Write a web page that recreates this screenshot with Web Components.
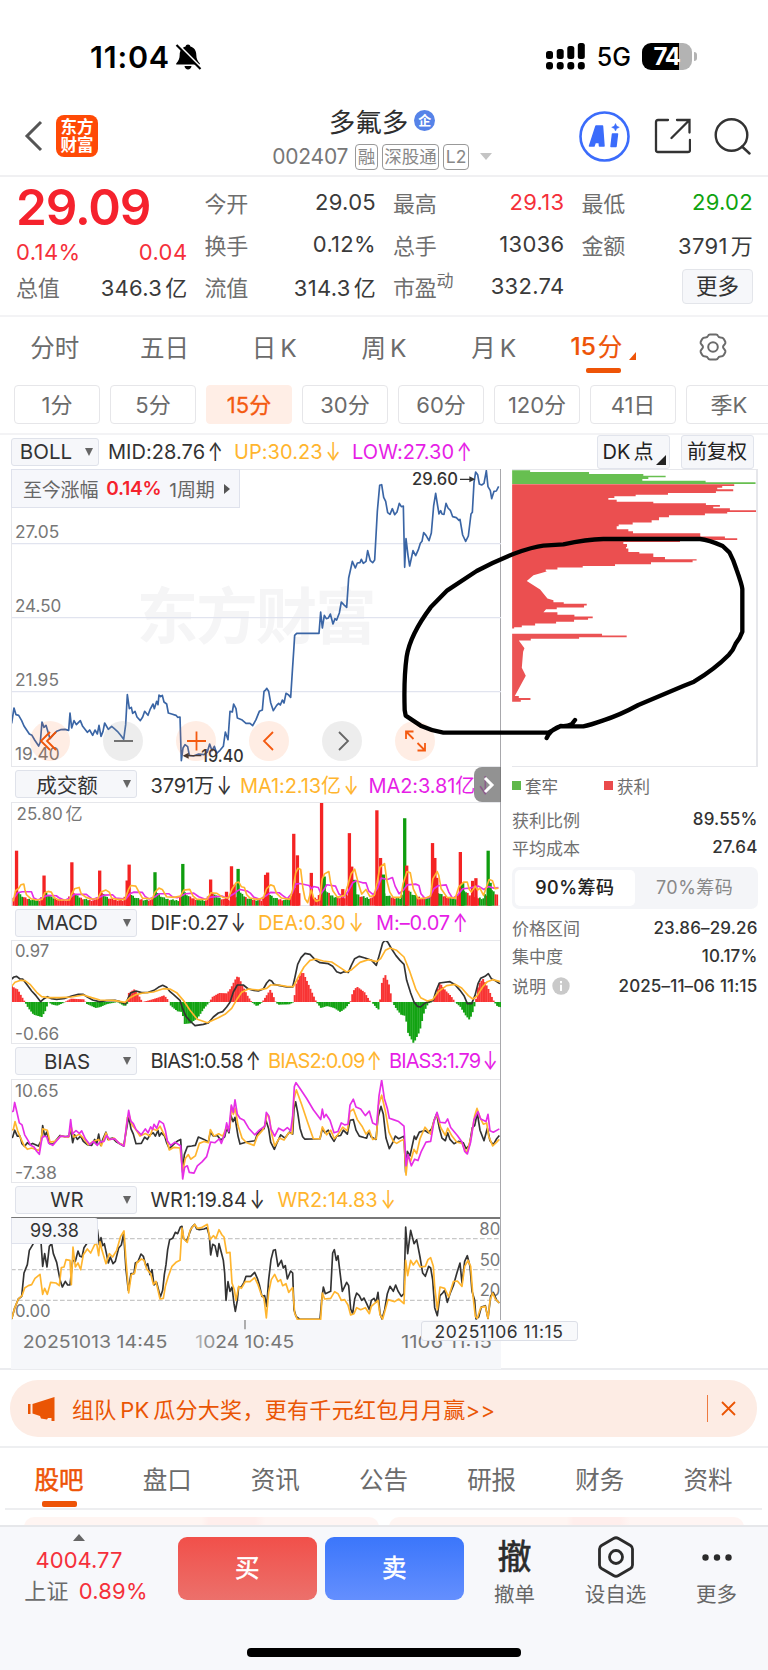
<!DOCTYPE html>
<html lang="zh-CN">
<head>
<meta charset="utf-8">
<meta name="viewport" content="width=device-width, initial-scale=1">
<title>多氟多 002407</title>
<style>
  body {
    margin: 0;
    background: #fff;
    color: #333;
    font-family: Inter, "Noto Sans CJK SC", sans-serif;
    overflow: hidden;
  }
</style>
</head>
<body>
<stock-app></stock-app>

<script>
// Base class: every element renders its markup once into an open shadow root
class BaseElement extends HTMLElement {
  constructor() {
    super();
    this.attachShadow({ mode: 'open' });
  }
  connectedCallback() {
    this.shadowRoot.innerHTML = `
      <style>
        :host { display: block; box-sizing: border-box; }
        * { box-sizing: border-box; }
        svg { display: block; flex: none; }
      </style>` + this.render();
  }
}

class StatusBar extends BaseElement {
  render() {
    return `
      <style>
        :host { height: 96px; padding: 41px 71px 0 90px; color: #000; }
        .row { display: flex; align-items: center; height: 31px; }
        .time { font-size: 30.500px; font-weight: 600; letter-spacing: 0.8px; width: 84px; white-space: nowrap; }
        .net { font-size: 25px; font-weight: 500; margin: 0 11px 0 12px; letter-spacing: 0.1px; }
        .signal { margin-left: auto; }
        .battery { display: flex; align-items: center; }
        .level {
          width: 50px; height: 27px; border-radius: 9px; text-align: center;
          background: linear-gradient(90deg, #000 74%, #b3b3b3 74%);
          color: #fff; font-size: 24px; font-weight: 700; line-height: 27px; letter-spacing: -1.3px;
          padding-right: 1px;
        }
        .cap { width: 3px; height: 9px; margin-left: 2px; border-radius: 0 4px 4px 0; background: #b3b3b3; }
      </style>
      <div class="row">
        <span class="time">11:04</span>
        <svg width="28" height="28" viewBox="0 0 28 28">
          <path d="M14 1.500c1.400 0 2.200.8 2.400 2 4 1.200 5.800 4.200 5.900 8.200.1 4 1 5.800 3.500 8.700v1.100H2.200v-1.100c2.500-2.900 3.400-4.700 3.500-8.700.1-4 1.900-7 5.900-8.200.2-1.200 1-2 2.400-2z"/>
          <path d="M10.500 23h7c-.3 2.200-1.700 3.400-3.500 3.400s-3.200-1.200-3.500-3.400z"/>
          <path d="M4 2 27.500 25.500" stroke="#fff" stroke-width="3"/>
          <path d="M2.500 2 26.500 26" stroke="#000" stroke-width="2.200"/>
        </svg>
        <svg class="signal" width="39" height="27" viewBox="0 0 39 27">
          <g>
            <rect x="0" y="8" width="7" height="8" rx="2.500"/><rect x="10.700" y="6" width="7" height="10" rx="2.500"/>
            <rect x="21.300" y="3" width="7" height="13" rx="2.500"/><rect x="31.800" y="0" width="7" height="16" rx="2.500"/>
            <rect x="0" y="19" width="7" height="7.500" rx="3"/><rect x="10.700" y="19" width="7" height="7.500" rx="3"/>
            <rect x="21.300" y="19" width="7" height="7.500" rx="3"/><rect x="31.800" y="19" width="7" height="7.500" rx="3"/>
          </g>
        </svg>
        <span class="net">5G</span>
        <div class="battery"><div class="level">74</div><div class="cap"></div></div>
      </div>`;
  }
}
customElements.define('status-bar', StatusBar);

class StockHeader extends BaseElement {
  render() {
    return `
      <style>
        :host {
          display: flex; align-items: center; height: 81px; padding: 0 17px 0 24px;
          border-bottom: 2px solid #f0f0f2;
        }
        .side { display: flex; align-items: center; width: 199px; padding-top: 1px; }
        .left { width: 188px; }
        .logo {
          display: grid; place-content: center; width: 42px; height: 42px; margin-left: 13px;
          border-radius: 8px; background: #ff4a06; color: #fff; text-align: center;
          font-size: 16.500px; line-height: 18px; font-weight: 700;
        }
        .center { flex: 1; display: flex; flex-direction: column; align-items: center; padding-top: 7px; }
        .name { display: flex; align-items: center; height: 35px; font-size: 26.500px; color: #2e2e2e; }
        .badge {
          width: 21px; height: 21px; margin-left: 6px; border-radius: 50%; background: #5683e8;
          color: #fff; font-size: 13px; font-weight: 700; line-height: 20px; text-align: center;
        }
        .code { display: flex; align-items: center; gap: 4px; height: 38px; font-size: 21px; color: #777; white-space: nowrap; }
        .num { margin-right: 3px; letter-spacing: -0.2px; }
        .tag {
          height: 26px; padding: 0 1.500px; border: 1.500px solid #999; border-radius: 4px;
          font-size: 17.500px; line-height: 23px; color: #888;
        }
        .code svg { margin-left: 7px; }
        .right { justify-content: flex-end; gap: 23.500px; }
      </style>
      <div class="side left">
        <svg width="19" height="32" viewBox="0 0 19 32"><path d="M17 2 3 16l14 14" fill="none" stroke="#555" stroke-width="3"/></svg>
        <div class="logo"><span>东方</span><span>财富</span></div>
      </div>
      <div class="center">
        <div class="name">多氟多<span class="badge">企</span></div>
        <div class="code">
          <span class="num">002407</span>
          <span class="tag">融</span><span class="tag">深股通</span><span class="tag">L2</span>
          <svg width="12" height="7" viewBox="0 0 12 7"><path d="M0 0h12L6 7z" fill="#c4c4c4"/></svg>
        </div>
      </div>
      <div class="side right">
        <svg width="51" height="51" viewBox="0 0 51 51">
          <circle cx="25.500" cy="25.500" r="24" fill="none" stroke="#3b6cfb" stroke-width="2.600"/>
          <g fill="#3b6cfb" stroke="#3b6cfb" stroke-width="1.500" stroke-linejoin="round">
            <path fill-rule="evenodd" d="M10.500 35 17 15h6.500L25 35h-4.500l-.3-3.500h-4l-1.200 3.500zM17.800 27.500h2l-.2-5z"/>
            <path d="M33.500 23h5l-1.500 12.500h-5z"/>
            <path d="M36.500 12.500l1.200 2.600 2.600 1.200-2.600 1.200-1.200 2.500-1.200-2.500-2.600-1.200 2.600-1.200z" stroke-width="0.500"/>
          </g>
        </svg>
        <svg width="37" height="36" viewBox="0 0 37 36" fill="none" stroke="#333" stroke-width="2.300" stroke-linecap="round">
          <path d="M14 2H4Q2 2 2 4v28q0 2 2 2h30q2 0 2-2V22M23 2h12.500v12.500M35 2.500 17.500 20"/>
        </svg>
        <svg width="37" height="38" viewBox="0 0 37 38" fill="none" stroke="#333" stroke-width="2.400" stroke-linecap="round">
          <circle cx="17.500" cy="18" r="15.800"/><path d="m28 29.500 7.500 7"/>
        </svg>
      </div>`;
  }
}
customElements.define('stock-header', StockHeader);

class QuotePair extends BaseElement {
  render() {
    // Chinese units stand a little apart from the digits
    const value = this.getAttribute('value').replace(/[亿万]/, '<i>$&</i>');
    return `
      <style>
        :host { display: flex; justify-content: space-between; align-items: center; height: 42px; font-size: 22px; white-space: nowrap; }
        .label { color: #6e6e6e; letter-spacing: -0.2px; }
        .value { color: var(--tone, #3a3a3a); letter-spacing: 0.3px; }
        i { margin-left: 3px; font-style: normal; }
        sup { font-size: 17px; line-height: 0; vertical-align: 9px; }
      </style>
      <span class="label"><slot></slot>${this.hasAttribute('sup') ? `<sup>${this.getAttribute('sup')}</sup>` : ''}</span>
      <span class="value">${value}</span>`;
  }
}
customElements.define('quote-pair', QuotePair);

class QuoteGrid extends BaseElement {
  render() {
    return `
      <style>
        :host {
          display: grid; grid-template-columns: repeat(4, 171.500px); column-gap: 17px;
          height: 140px; padding: 4px 15px 0 16px; border-bottom: 2px solid #f3f3f5;
        }
        .price { height: 52px; color: #f5222d; font-size: 49.500px; line-height: 52px; font-weight: 600; letter-spacing: -1.1px; }
        .change { display: flex; justify-content: space-between; height: 32px; line-height: 38px; color: #f5303a; font-size: 22px; letter-spacing: 0.4px; }
        .up { --tone: #f5303a; }
        .down { --tone: #0fa30f; }
        .more {
          width: 71px; height: 35px; margin: 4px 0 0 auto; border: 1px solid #e3e5ea; border-radius: 4px;
          background: #f6f7fa; text-align: center; font-size: 21.500px; line-height: 32px;
        }
      </style>
      <div>
        <div class="price">29.09</div>
        <div class="change"><span>0.14%</span><span>0.04</span></div>
        <quote-pair value="346.3亿">总值</quote-pair>
      </div>
      <div>
        <quote-pair value="29.05">今开</quote-pair>
        <quote-pair value="0.12%">换手</quote-pair>
        <quote-pair value="314.3亿">流值</quote-pair>
      </div>
      <div>
        <quote-pair class="up" value="29.13">最高</quote-pair>
        <quote-pair value="13036">总手</quote-pair>
        <quote-pair value="332.74" sup="动">市盈</quote-pair>
      </div>
      <div>
        <quote-pair class="down" value="29.02">最低</quote-pair>
        <quote-pair value="3791万">金额</quote-pair>
        <div class="more">更多</div>
      </div>`;
  }
}
customElements.define('quote-grid', QuoteGrid);

class PeriodTabs extends BaseElement {
  render() {
    const tabs = ['分时', '五日', '日 K', '周 K', '月 K'];
    return `
      <style>
        :host { display: grid; grid-template-columns: repeat(7, 1fr); height: 62px; font-size: 24.500px; color: #6b6b6b; }
        div { display: flex; justify-content: center; align-items: center; height: 58px; word-spacing: -3px; }
        .on { display: grid; grid-template-rows: 51px 5px; height: 56px; justify-items: center; align-content: start; color: #ee5407; }
        .on span { display: flex; align-items: center; padding-top: 6px; gap: 2px; height: 51px; white-space: nowrap; -webkit-text-stroke: 0.2px #ee5407; }
        .on svg { margin: 20px 0 0 5px; }
        .on i { width: 35px; height: 5px; border-radius: 2px; background: #ee5407; }
        .gear svg { margin-top: 1px; }
      </style>
      ${tabs.map(t => `<div>${t}</div>`).join('')}
      <div class="on">
        <span><b style="font-weight:500">15</b>分<svg width="7" height="8" viewBox="0 0 7 8"><path d="M7 0v8H0z" fill="#ee5407"/></svg></span>
        <i></i>
      </div>
      <div class="gear">
        <svg width="30" height="28" viewBox="0 0 30 28" fill="none" stroke="#6b6b6b" stroke-width="2" stroke-linejoin="round">
          <path d="M12 1.500h6q1.500 0 2 1.300.7 1.700 2.500 1.700 2.500 0 3.300 1.500l1.500 2.800q.5 1.300-.6 2.500-1.700 1.700-1.700 2.700t1.700 2.700q1.100 1.200.6 2.500L25.800 22q-.8 1.500-3.300 1.500-1.800 0-2.500 1.700-.5 1.300-2 1.300h-6q-1.500 0-2-1.300-.7-1.700-2.500-1.700-2.500 0-3.300-1.500l-1.500-2.800q-.5-1.300.6-2.500Q5 15 5 14t-1.700-2.700q-1.100-1.200-.6-2.500L4.200 6Q5 4.500 7.500 4.500 9.300 4.500 10 2.800q.5-1.300 2-1.300z"/>
          <circle cx="15" cy="14" r="4.800"/>
        </svg>
      </div>`;
  }
}
customElements.define('period-tabs', PeriodTabs);

class PeriodChips extends BaseElement {
  render() {
    const chips = ['1分', '5分', '15分', '30分', '60分', '120分', '41日', '季K'];
    return `
      <style>
        :host { height: 55.500px; padding: 6px 0 0 14px; border-bottom: 2px solid #f3f3f5; overflow: hidden; }
        .row { display: flex; gap: 10px; width: 800px; }
        .chip {
          flex: none; width: 86px; height: 39px; border: 1.500px solid #e6e6e9; border-radius: 4px;
          text-align: center; font-size: 22px; line-height: 38px; color: #6b6b6b;
        }
        .on { border-color: #ffeee6; background: #ffeee6; color: #f45a10; -webkit-text-stroke: 0.3px #f45a10; }
      </style>
      <div class="row">
        ${chips.map(c => `<div class="chip ${c === '15分' ? 'on' : ''}">${c}</div>`).join('')}
      </div>`;
  }
}
customElements.define('period-chips', PeriodChips);

// Select box with the indicator name, followed by its current readings
class IndicatorBar extends BaseElement {
  render() {
    const colors = ['#333', '#ffb52e', '#e61ee6'];
    const values = this.getAttribute('values').split('|');
    return `
      <style>
        :host { display: flex; align-items: center; height: 34.500px; padding-left: 4px; white-space: nowrap; }
        .select {
          display: flex; flex: none; align-items: center; width: 122px; height: 28px; padding-right: 5px;
          border: 1px solid #dfe2ea; border-radius: 3px; background: #f6f7fa; font-size: 20.500px; color: #333;
        }
        .select span { flex: 1; text-align: center; padding-right: 5px; }
        .values {
          display: grid; grid-template-columns: ${this.getAttribute('cols')}; margin-left: 13.500px;
          font-size: 20px; letter-spacing: var(--track, -0.1px);
        }
        .values i {
          display: inline-block; width: 10px; margin-left: 5px; font-style: normal; text-indent: -3px;
          letter-spacing: 0; transform: scale(0.9, 1.3);
        }
        :host([compact]) { padding-left: 0; }
        :host([compact]) .select { width: 88px; }
        :host([compact]) .select span { padding-right: 4px; }
        :host([compact]) .values { margin-left: 9.500px; }
      </style>
      <div class="select"><span><slot></slot></span>
        <svg width="8" height="8" viewBox="0 0 8 8"><path d="M0 0h8L4 8z" fill="#666"/></svg>
      </div>
      <div class="values">
        ${values.map((v, i) => `<span style="color:${colors[i]}">${v.slice(0, -1)}<i>${v.slice(-1)}</i></span>`).join('')}
      </div>`;
  }
}
customElements.define('indicator-bar', IndicatorBar);

class OverlayBar extends BaseElement {
  render() {
    return `
      <style>
        :host { display: flex; align-items: center; height: 34.500px; padding: 0 14.500px 0 10.500px; }
        indicator-bar { flex: 1; --track: 0.05px; }
        .btn {
          position: relative; width: 73px; height: 34px; margin-left: 11px; border: 1px solid #e1e4ec; border-radius: 3px;
          background: #f6f7fa; text-align: center; font-size: 20px; line-height: 32px; color: #222; white-space: nowrap;
        }
        .dk { padding-right: 10px; }
        .dk span { margin-left: 3px; }
        .dk svg { position: absolute; right: 3px; bottom: 3px; }
      </style>
      <indicator-bar compact cols="126px 118px auto" values="MID:28.76↑|UP:30.23↓|LOW:27.30↑">BOLL</indicator-bar>
      <div class="btn dk">DK<span>点</span><svg width="10" height="10" viewBox="0 0 10 10"><path d="M10 0v10H0z" fill="#222"/></svg></div>
      <div class="btn">前复权</div>`;
  }
}
customElements.define('overlay-bar', OverlayBar);

// Shared helpers for the charts; all plots use three units per CSS pixel
const line = (points, color, width = 4) =>
  `<polyline points="${points}" fill="none" stroke="${color}" stroke-width="${width}" stroke-linejoin="round"/>`;
const label = (x, y, text, width, color = '#777', weight = 400) =>
  `<text x="${x}" y="${y}" textLength="${width}" lengthAdjust="spacingAndGlyphs" font-size="51" font-weight="${weight}" fill="${color}">${text}</text>`;

class PriceChart extends BaseElement {
  render() {
    const price = `35,776 42,730 48,750 56,752 65,768 72,784 80,796 88,808 96,812 104,826 116,844 121,832 126,772 132,788
      138,782 145,805 150,822 160,810 170,800 182,795 195,794 206,797 210,745 215,790 222,768 229,780 241,768 248,785 262,803
      269,796 278,812 285,796 292,808 297,782 303,815 309,800 314,775 325,794 335,785 343,792 352,800 362,812 371,824 377,780
      382,690 388,732 394,728 398,746 405,740 411,757 421,768 428,757 434,740 444,752 450,735 459,718 463,732 470,710 474,720
      477,691 482,696 487,692 492,712 500,718 505,745 515,748 528,752 533,758 540,757 544,888 549,850 555,840 563,846 568,872
      580,874 596,868 612,870 622,862 629,838 636,858 643,845 650,866 660,857 670,845 676,802 684,825 690,740 697,742 701,718
      708,732 712,760 725,765 738,776 750,776 758,783 768,765 778,740 787,736 792,680 797,676 800,671 806,680 812,714 820,738
      830,722 836,716 841,721 847,706 852,715 858,686 865,690 872,698 878,605 881,560 884,512 890,506 957,506 962,442 967,490
      973,452 979,462 985,460 991,448 999,478 1005,462 1010,466 1018,445 1024,412 1031,420 1040,428 1046,340 1054,304
      1057,290 1066,310 1072,295 1080,294 1084,284 1090,296 1098,290 1103,258 1111,288 1118,294 1124,286 1132,140 1139,62
      1145,60 1151,98 1157,110 1163,144 1170,149 1177,132 1184,150 1191,142 1198,116 1204,126 1210,124 1214,308 1218,222
      1224,272 1229,304 1239,258 1247,273 1255,255 1261,236 1266,230 1271,204 1278,212 1287,228 1294,205 1301,123 1307,86
      1313,124 1317,148 1322,138 1326,148 1332,149 1338,116 1344,130 1351,137 1358,156 1369,159 1377,167 1380,164 1388,211
      1397,230 1405,214 1413,148 1417,143 1422,54 1427,22 1433,30 1438,58 1445,61 1452,56 1459,18 1464,66 1471,78 1475,102
      1482,80 1489,79 1496,65`;
    return `
      <style>
        :host { position: relative; height: 298px; border: 1px solid #e6e7eb; border-right: 0; }
        .since {
          position: absolute; left: -1px; top: -1px; display: flex; align-items: center; gap: 8px; width: 229px; height: 39px; padding-left: 11px;
          border: 1px solid #dfe2ec; background: #f6f7fb; font-size: 19px; color: #666; white-space: nowrap; letter-spacing: -0.2px;
        }
        .since b { color: #f5222d; font-weight: 600; }
        .since svg { margin-left: 1px; }
        .tools { position: absolute; left: 18px; top: 251px; display: flex; gap: 33px; }
      </style>
      <svg width="489" height="296" viewBox="36 16 1467 888" font-family="Inter, 'Noto Sans CJK SC', sans-serif">
        <text x="410" y="523" textLength="720" font-size="184" font-weight="700" fill="#f5f5f6" font-family="Noto Sans CJK SC">东方财富</text>
        <path d="M33 237H1503M33 459H1503M33 681H1503" stroke="#e1e4ef" stroke-width="4"/>
        ${label(45, 219, '27.05', 133)}${label(45, 442, '24.50', 139)}${label(45, 664, '21.95', 132)}${label(45, 887, '19.40', 134)}
        ${line(price, '#3a65a5', 5)}
        ${label(1236, 62, '29.60', 138, '#333', 500)}${label(604, 892, '19.40', 127, '#333', 500)}
        <path d="M1380 44h36M552 873h52" stroke="#333" stroke-width="4"/>
        <path d="M1426 44l-18-9v18zM548 873l18-9v18z" fill="#333"/>
      </svg>
      <div class="since"><span>至今涨幅</span><b>0.14%</b><span>1周期</span>
        <svg width="6" height="10" viewBox="0 0 6 10"><path d="M0 0v10l6-5z" fill="#555"/></svg>
      </div>
      <div class="tools">${this.tools()}</div>`;
  }
  tools() {
    const icons = [
      ['#ee5407', 'M20 11 11 20l9 9M26 11l-9 9 9 9'],
      ['#666', 'M11 20h19'],
      ['#f45a10', 'M11 20h19M20.500 10.500v19'],
      ['#f45a10', 'M24 11l-9 9 9 9'],
      ['#666', 'M17 11l9 9-9 9'],
      ['#f45a10', 'M11 18v-7.500h7.500M11.500 11l7 7M30 22v7.500h-7.500M29.500 29l-7-7']
    ];
    return icons.map(([c, d]) => `
      <svg width="40" height="40" viewBox="0 0 40 40">
        <circle cx="20" cy="20" r="20" fill="${c === '#666' ? '#999' : '#ff6a20'}" opacity="${c === '#666' ? 0.18 : 0.12}"/>
        <path d="${d}" fill="none" stroke="${c}" stroke-width="1.800"/>
      </svg>`).join('');
  }
}
customElements.define('price-chart', PriceChart);

const BAR = 5.235;

class VolumeChart extends BaseElement {
  bars() {
    // Opening spikes: x, top, colour
    const spikes = [
      [45, 255, 1], [128, 330, 1], [212, 290, 1], [296, 315, 1], [379, 345, 1], [385, 297, 1], [463, 320, 0], [547, 295, 0],
      [631, 342, 1], [679, 379, 1], [694, 302, 1], [702, 358, 1], [714, 310, 0], [797, 328, 1], [803, 321, 1], [882, 204, 1],
      [893, 269, 1], [935, 322, 1], [966, 110, 1], [974, 333, 0], [1030, 371, 1], [1050, 202, 1], [1057, 303, 1], [1066, 343, 0],
      [1133, 133, 1], [1144, 277, 1], [1153, 327, 0], [1217, 157, 0], [1223, 300, 1], [1301, 232, 1], [1308, 277, 1],
      [1314, 337, 1], [1385, 259, 1], [1392, 353, 0], [1422, 346, 1], [1432, 338, 1], [1469, 255, 0], [1475, 352, 0]
    ];
    // Runs of falling bars
    const falls = [[47, 62], [80, 108], [130, 158], [217, 232], [245, 262], [300, 320], [387, 410], [424, 440], [462, 500],
      [508, 532], [545, 565], [585, 612], [640, 660], [712, 730], [738, 752], [762, 776], [805, 832], [845, 870], [970, 982],
      [990, 1010], [1060, 1080], [1086, 1110], [1150, 1172], [1186, 1206], [1228, 1252], [1275, 1292], [1312, 1330],
      [1348, 1372], [1384, 1400], [1440, 1458], [1466, 1484]];
    let out = '';
    for (let i = 0; i < 280; i++) {
      const x = 33 + i * BAR;
      if (x > 897 && x < 930) continue;
      const phase = (i + 14) % 16;
      const busy = x > 860 ? 1.4 : 1;
      const h = (13 + 32 * Math.exp(-phase / 3.6) + (i * 7 % 5)) * busy + (phase > 13 ? 10 : 0);
      const down = falls.some(([a, b]) => x >= a && x < b);
      out += `<rect x="${x.toFixed(1)}" y="${(421 - h).toFixed(1)}" width="5.400" height="${h.toFixed(1)}" fill="${down ? '#0f9d0f' : '#f42323'}"/>`;
    }
    for (const [x, y, up] of spikes) {
      out += `<rect x="${x - 5}" y="${y}" width="10" height="${421 - y}" fill="${up ? '#f42323' : '#0f9d0f'}"/>`;
    }
    return out;
  }
  render() {
    const ma1 = `35,408 42,376 52,368 58,358 67,356 70,372 75,388 88,400 105,404 122,402 130,382 140,378 150,380 158,396 172,404 205,404
      212,385 220,370 234,366 240,385 255,396 270,401 290,400 300,380 315,374 325,380 332,398 350,402 372,402 383,372 390,360
      405,362 412,375 425,398 455,400 463,380 475,368 485,372 498,394 520,396 540,392 550,374 568,372 578,392 590,402 620,402
      632,382 650,384 668,396 685,398 695,372 708,352 716,350 724,364 733,366 740,388 750,398 772,402 790,398 800,370 812,358
      822,362 830,384 845,398 870,402 880,368 888,322 895,308 903,312 910,370 916,400 924,412 935,374 942,398 950,408 960,404
      968,340 975,325 988,318 993,350 1000,376 1014,396 1035,390 1045,360 1055,325 1066,311 1076,350 1087,386 1100,372 1112,394
      1125,390 1134,350 1142,305 1156,294 1163,345 1172,380 1182,396 1205,396 1212,355 1224,318 1234,322 1243,370 1257,400
      1280,398 1295,392 1302,340 1315,318 1320,330 1327,370 1345,396 1370,398 1380,365 1395,350 1406,350 1412,372 1418,380
      1430,362 1437,374 1444,368 1455,390 1462,370 1472,342 1482,346 1490,370 1500,368`;
    const ma2 = `35,402 48,382 62,379 90,379 97,398 110,404 128,394 140,390 165,391 173,397 190,405 208,396 220,387 256,387 262,392
      275,402 295,396 310,389 335,388 345,398 375,401 388,384 400,380 425,381 433,393 445,401 465,393 475,385 505,385 515,394
      530,397 545,390 555,385 580,383 595,394 615,402 632,395 665,392 680,398 700,386 712,376 720,372 742,377 752,384 762,396
      780,402 797,392 812,381 838,382 848,390 862,400 878,382 888,356 900,354 928,360 936,370 942,363 956,366 964,385 972,374
      982,358 1008,362 1018,385 1030,395 1045,380 1060,352 1070,346 1090,352 1100,352 1108,376 1122,388 1135,368 1146,338
      1165,342 1180,336 1188,362 1200,385 1212,375 1225,358 1250,356 1260,360 1266,385 1278,399 1292,396 1305,370 1318,361
      1342,358 1350,380 1362,399 1378,388 1392,370 1412,368 1428,364 1440,362 1456,372 1470,363 1486,368 1500,366`;
    return `
      <style>:host { height: 104px; border: 1px solid #e6e7eb; border-right: 0; }</style>
      <svg width="489" height="103" viewBox="36 111 1467 311" font-family="Inter, 'Noto Sans CJK SC', sans-serif">
        ${this.bars()}
        ${line(ma2, '#e62ee6', 5)}${line(ma1, '#ffb52e', 5)}
        ${label(45, 161, '25.80<tspan dx="8">亿</tspan>', 199)}
      </svg>`;
  }
}
customElements.define('volume-chart', VolumeChart);

class MacdChart extends BaseElement {
  // Histogram drawn from interpolated heights around the zero line
  histogram() {
    const keys = [[33, -50], [40, -42], [50, -38], [60, -20], [72, 0], [82, 18], [98, 38], [122, 45], [134, 25], [142, 0], [152, 7],
      [168, 11], [182, 5], [192, 0], [210, -10], [248, -8], [258, 6], [285, 18], [298, 15], [318, 6], [350, 0], [370, 12],
      [378, 10], [382, -26], [400, -38], [413, -20], [424, 0], [445, -5], [468, -12], [490, -20], [502, -5], [510, 12],
      [530, 28], [544, 30], [550, 66], [568, 64], [590, 48], [610, 18], [626, 0], [634, -15], [655, -27], [678, -26], [690, -42],
      [702, -66], [711, -80], [722, -55], [740, -18], [752, 0], [768, 13], [784, 0], [797, -20], [809, -38], [824, 0],
      [832, 8], [865, 7], [879, 0], [884, -50], [896, -78], [905, -92], [920, -58], [936, -22], [946, 0], [960, 18], [978, 12],
      [1000, 18], [1018, 30], [1034, 18], [1048, 0], [1056, -32], [1068, -46], [1090, -30], [1106, -4], [1114, 2],
      [1132, 24], [1137, 0], [1141, -52], [1152, -84], [1164, -52], [1174, 0], [1186, 20], [1200, 38], [1214, 42], [1220, 90],
      [1238, 124], [1256, 88], [1270, 28], [1282, 4], [1294, 0], [1306, -25], [1316, -58], [1334, -34], [1350, -18], [1362, 0],
      [1378, 14], [1394, 40], [1406, 54], [1416, 28], [1424, 0], [1432, -52], [1446, -70], [1460, -44], [1474, -12], [1480, 0],
      [1490, 14], [1503, 16]];
    let out = '';
    for (let x = 33; x < 1500; x += BAR) {
      const k = keys.findIndex(p => p[0] > x);
      const [x0, y0] = keys[k - 1];
      const [x1, y1] = keys[k];
      const h = y0 + (y1 - y0) * (x - x0) / (x1 - x0);
      out += `<rect x="${x.toFixed(1)}" y="${h < 0 ? 275 + h : 275}" width="6" height="${Math.abs(h)}" fill="${h < 0 ? '#f83434' : '#13a313'}"/>`;
    }
    return out;
  }
  render() {
    return `
      <style>:host { height: 104px; border: 1px solid #e6e7eb; border-right: 0; }</style>
      <svg width="489" height="102" viewBox="36 92 1467 306" preserveAspectRatio="none" font-family="Inter, sans-serif">
        ${this.histogram()}
        <g stroke-linecap="round">
        ${line(`35,206 42,200 50,198 60,206 68,206 80,222 95,242 108,256 122,274 132,265 142,259 155,265 170,267 195,264 215,257
          235,252 250,252 262,260 278,269 298,274 320,271 345,270 360,274 377,281 385,262 393,247 408,242 425,247 445,246 462,240
          475,231 488,225 500,231 510,244 520,252 540,270 548,295 558,318 570,332 585,346 610,342 625,338 640,320 655,308
          668,304 680,290 690,276 700,245 712,224 730,224 745,236 762,240 775,242 790,236 800,218 808,209 815,212 822,222
          840,226 860,230 878,230 885,200 893,162 903,142 915,129 930,132 945,148 960,157 985,160 998,168 1010,184 1022,189
          1032,184 1045,186 1054,165 1064,145 1078,138 1095,143 1115,150 1129,165 1138,134 1148,98 1155,90 1163,95 1175,116
          1188,136 1200,150 1212,162 1220,210 1232,248 1242,275 1252,288 1262,290 1275,278 1300,270 1308,242 1318,218 1350,214
          1365,223 1380,240 1392,256 1402,280 1415,280 1425,255 1434,220 1442,204 1455,198 1465,190 1474,205 1484,210 1498,219`, '#333', 5)}
        ${line(`35,228 45,216 62,210 75,211 90,222 110,246 125,259 145,262 180,262 215,260 250,254 275,262 300,269 340,270
          375,276 390,262 410,252 430,248 460,245 490,235 510,236 530,247 550,270 570,300 592,327 622,337 655,322 675,312
          695,294 712,265 725,246 745,236 775,239 800,234 812,224 835,224 860,228 880,229 895,200 912,170 930,150 948,146
          970,152 995,155 1015,168 1040,185 1055,178 1080,156 1105,148 1130,154 1142,145 1156,120 1170,113 1190,120 1212,140
          1228,180 1248,238 1262,262 1282,272 1298,268 1315,244 1340,226 1365,222 1385,233 1405,256 1418,266 1430,258
          1448,230 1462,214 1478,208 1498,213`, '#ffb52e', 5)}
        </g>
        ${label(45, 141, '0.97', 103)}${label(45, 389, '-0.66', 133)}
      </svg>`;
  }
}
customElements.define('macd-chart', MacdChart);

class BiasChart extends BaseElement {
  render() {
    return `
      <style>:host { height: 104px; border: 1px solid #e6e7eb; border-right: 0; }</style>
      <svg width="489" height="102" viewBox="36 92 1467 309" preserveAspectRatio="none" font-family="Inter, sans-serif">
        ${line(`33,268 38,265 44,244 52,262 60,262 66,285 74,293 82,282 90,288 98,284 115,292 124,275 128,230 134,262 140,250
          150,285 160,286 170,272 180,260 195,264 207,262 212,240 218,282 224,258 232,272 242,262 250,278 262,288 275,290
          284,272 290,286 296,256 302,290 310,268 318,250 324,272 338,268 350,280 371,292 378,250 386,202 393,240 400,256
          408,285 424,284 434,265 442,272 450,258 460,252 466,262 474,245 478,262 484,252 494,262 500,282 508,300 520,288
          534,276 542,272 548,372 553,318 562,294 575,292 586,290 595,265 612,272 625,280 631,250 640,262 652,260 662,274
          674,264 680,238 687,252 693,200 699,218 705,205 714,262 720,286 740,280 765,276 772,256 782,244 792,240 798,215
          806,240 812,280 823,302 832,280 842,258 855,268 868,250 878,256 882,180 887,158 893,190 900,238 908,264 914,271
          960,270 967,240 975,252 985,244 992,262 1002,278 1010,262 1022,260 1030,244 1042,256 1050,214 1060,212 1068,244
          1078,262 1092,266 1100,268 1106,248 1114,265 1128,272 1134,205 1143,172 1150,196 1158,268 1168,300 1178,282
          1186,262 1196,270 1212,262 1217,372 1222,308 1230,322 1243,262 1248,272 1258,250 1275,245 1285,252 1296,238
          1302,215 1310,195 1318,238 1326,268 1336,276 1343,252 1350,272 1362,285 1375,278 1390,282 1398,300 1408,290
          1417,236 1424,230 1432,192 1440,244 1452,276 1462,238 1470,276 1480,288 1490,270 1498,260`, '#333', 5)}
        ${line(`33,244 40,242 45,218 53,246 62,268 72,290 82,302 95,298 118,306 128,240 142,244 150,280 165,278 182,262 206,265
          213,232 222,265 238,256 250,268 265,288 280,278 296,272 304,292 318,252 326,274 342,268 358,284 373,290 382,205
          388,200 396,228 406,240 420,262 436,254 450,262 458,240 470,245 480,232 490,252 500,270 508,304 522,296 540,298
          548,368 556,330 565,318 572,332 586,322 598,284 612,278 625,282 631,242 642,262 656,255 668,262 680,235 690,236
          694,172 700,196 706,178 714,230 726,268 740,282 762,290 772,262 788,244 795,228 801,196 808,205 814,250 824,292
          838,268 852,274 866,252 876,255 882,150 889,122 905,166 922,218 940,270 960,270 967,234 980,258 992,244 1003,270
          1012,260 1028,235 1042,246 1050,188 1060,180 1072,212 1086,232 1098,256 1108,244 1118,272 1129,270 1135,170
          1145,138 1156,186 1167,250 1180,278 1190,284 1202,276 1212,272 1218,380 1224,320 1232,338 1242,302 1250,315
          1260,270 1275,235 1292,256 1302,215 1311,195 1322,236 1336,260 1343,238 1356,262 1370,280 1386,284 1400,314
          1414,262 1424,200 1431,178 1440,205 1450,226 1460,222 1466,262 1478,292 1490,280 1498,272`, '#ffb52e', 5)}
        ${line(`33,189 40,186 44,160 50,186 58,222 66,228 74,258 84,275 92,290 102,295 110,308 118,317 126,268 132,262 140,264
          146,284 158,290 170,276 182,262 206,264 212,212 217,256 228,245 238,254 245,246 256,270 270,288 280,278 292,290
          300,280 312,278 320,260 330,272 344,270 358,284 372,292 379,234 386,184 392,216 400,224 408,242 424,258 436,240
          444,252 452,234 458,242 462,226 470,238 478,216 490,224 496,244 502,276 512,290 525,280 542,292 548,392 554,356
          562,352 568,372 582,374 592,352 606,340 620,324 632,280 645,282 658,270 664,284 674,256 680,222 686,248 694,168
          700,190 705,152 712,196 720,208 732,214 746,238 764,258 778,244 794,232 799,190 806,200 813,240 824,262 836,238
          850,246 862,236 872,246 878,200 883,112 888,100 900,118 920,148 940,182 962,212 967,180 972,206 978,196 990,214
          1002,252 1014,248 1024,222 1034,228 1044,226 1050,168 1060,150 1068,174 1082,180 1096,200 1108,186 1118,222
          1130,228 1137,140 1145,92 1153,148 1162,178 1168,208 1180,212 1196,218 1212,232 1218,352 1224,318 1234,352
          1244,332 1254,336 1264,308 1278,280 1292,278 1302,218 1311,190 1320,220 1336,222 1343,210 1352,236 1372,260
          1386,280 1394,308 1402,316 1412,280 1422,212 1434,188 1442,210 1458,218 1464,196 1470,246 1480,250 1498,240`, '#e62ee6', 5)}
        ${label(45, 143, '10.65', 131)}${label(45, 391, '-7.38', 126)}
      </svg>`;
  }
}
customElements.define('bias-chart', BiasChart);

class WrChart extends BaseElement {
  render() {
    return `
      <style>
        :host { position: relative; height: 103px; border-top: 2px solid #777; border-left: 1px solid #e6e7eb; }
        .max {
          position: absolute; left: -1px; top: -1px; width: 87px; height: 26px; border: 1px solid #dfe2ec; border-top: 0;
          border-radius: 0 3px 3px 0; background: #f6f7fa; text-align: center; font-size: 18px; line-height: 26px; color: #333;
        }
      </style>
      <svg width="489" height="102" viewBox="36 18 1467 306" font-family="Inter, sans-serif">
        <path d="M33 77H1503M33 170H1503M33 262H1503" stroke="#c8c8c8" stroke-width="4" stroke-dasharray="14 7"/>
        ${label(1438, 65, '80', 63)}${label(1439, 158, '50', 62)}${label(1439, 250, '20', 62)}${label(45, 313, '0.00', 107)}
        ${line(`35,318 44,285 55,258 65,250 72,180 82,155 88,112 100,92 112,60 122,72 128,160 134,122 141,162 148,100 155,92
          160,122 170,148 180,200 187,222 196,205 203,216 210,216 218,142 226,145 234,114 240,130 246,132 252,104 260,92
          272,72 284,80 292,48 298,95 303,74 308,98 313,92 320,125 325,150 331,132 339,152 346,145 356,105 364,96 371,62
          378,170 385,232 393,182 402,182 406,150 414,146 423,123 430,130 438,160 443,152 450,185 456,170 462,216 470,208
          476,232 481,252 488,232 493,185 498,155 503,110 509,80 518,76 526,58 533,62 541,42 546,40 550,75 560,85 568,62
          575,44 584,34 590,48 598,50 612,48 621,44 628,68 632,126 638,94 645,98 652,130 657,92 665,122 670,142 674,180
          678,262 684,206 690,235 696,222 702,272 706,295 712,262 716,222 724,222 732,208 738,190 752,190 764,178 772,196
          778,215 786,250 794,248 800,280 806,200 813,140 820,112 826,110 834,160 844,142 850,165 856,158 862,198 872,174
          878,180 882,290 888,310 900,319 960,319 965,262 970,222 976,242 992,235 998,120 1003,110 1009,142 1014,128
          1020,178 1027,235 1040,208 1046,218 1052,288 1058,302 1064,258 1070,240 1078,248 1085,262 1092,255 1100,272 1108,290
          1114,262 1122,256 1128,268 1134,238 1140,302 1146,318 1154,290 1162,242 1170,220 1180,235 1187,216 1194,234
          1204,250 1212,242 1217,42 1223,122 1232,52 1242,92 1250,80 1260,132 1268,180 1276,190 1286,160 1292,165 1298,200
          1304,284 1312,308 1320,248 1328,240 1334,232 1342,268 1350,242 1360,218 1370,182 1380,150 1386,210 1394,145
          1402,128 1410,160 1416,235 1424,262 1428,318 1436,312 1444,282 1456,278 1464,316 1472,250 1480,238 1490,262 1498,270`, '#333', 5)}
        ${line(`35,318 44,285 55,258 66,248 74,225 85,218 95,215 105,196 120,184 128,244 134,226 142,244 152,208 168,210 178,218
          184,164 192,162 198,140 210,142 214,215 219,102 226,162 234,150 242,170 250,125 262,108 272,120 284,95 290,92
          296,128 300,86 306,112 318,152 328,122 338,132 350,112 362,70 372,54 378,142 386,240 394,185 404,180 410,150
          424,138 432,142 440,168 452,182 460,214 468,205 480,258 490,256 496,220 505,190 516,160 528,148 540,142 546,45
          552,78 562,88 570,52 584,34 592,46 604,44 622,34 630,80 640,68 648,76 657,50 666,66 672,72 680,120 690,118
          696,210 703,230 708,262 716,220 724,226 736,206 750,206 764,194 774,215 784,245 792,256 799,315 806,238 814,200
          824,184 834,206 842,200 848,218 858,212 866,238 878,224 884,300 892,319 962,319 967,240 974,258 992,256 1004,236
          1014,242 1024,262 1034,260 1044,276 1052,306 1062,302 1070,284 1082,290 1096,284 1108,302 1114,280 1134,262
          1140,305 1148,318 1158,282 1164,260 1184,266 1196,258 1212,272 1217,142 1223,188 1232,142 1240,156 1250,142
          1260,162 1276,160 1284,140 1292,134 1300,160 1304,220 1312,290 1320,222 1334,226 1346,252 1360,206 1372,204
          1386,220 1394,160 1404,142 1412,160 1418,240 1426,310 1432,316 1442,284 1456,280 1464,316 1470,262 1478,240
          1486,258 1498,270`, '#ffb52e', 5)}
      </svg>
      <div class="max">99.38</div>`;
  }
}
customElements.define('wr-chart', WrChart);

class TimeAxis extends BaseElement {
  render() {
    return `
      <style>
        :host { position: relative; width: 490px; height: 49px; background: #f6f7fa; }
        .cursor {
          position: absolute; left: 409.500px; top: 1px; width: 157px; height: 20px; border: 1px solid #dcdfe7; border-radius: 3px;
          background: #f8f9fb; z-index: 2; color: #333; font-size: 17.500px; line-height: 19px; text-align: center; white-space: nowrap; letter-spacing: 0.55px;
        }
      </style>
      <svg width="490" height="49" viewBox="33 324 1470 147" font-family="Inter, sans-serif">
        <path d="M735 324v28" stroke="#888" stroke-width="4"/>
        <g font-size="53" fill="#777">
          <text x="68" y="407" textLength="434" lengthAdjust="spacingAndGlyphs">20251013 14:45</text>
          <text x="586" y="407" textLength="297" lengthAdjust="spacingAndGlyphs"><tspan fill="#b0b0b0">1</tspan><tspan fill="#949494">0</tspan>24 10:45</text>
          <text x="1203" y="407" textLength="273" lengthAdjust="spacingAndGlyphs">1106 11:15</text>
        </g>
      </svg>
      <div class="cursor">20251106 11:15</div>`;
  }
}
customElements.define('time-axis', TimeAxis);

class ChipPanel extends BaseElement {
  render() {
    return `
      <style>
        :host { width: 256.500px; padding-left: 11px; color: #333; }
        .plot { height: 298px; border: 1px solid #e6e7eb; border-left: 0; border-right-width: 2px; }
        .legend { display: flex; height: 37px; align-items: center; font-size: 16.500px; color: #6e6e6e; }
        .legend span { display: flex; align-items: center; gap: 4px; width: 92px; }
        .legend i { width: 9px; height: 9px; background: var(--dot); }
        .row { display: flex; justify-content: space-between; align-items: center; height: 28px; font-size: 17px; white-space: nowrap; }
        .row > :first-child { display: flex; align-items: center; gap: 6px; color: #707070; }
        .row b { font-weight: 500; letter-spacing: 0.15px; }
        .first { margin-top: 1px; }
        .switch { display: flex; height: 42px; margin: 6px 0 4.500px; padding: 3px; border-radius: 7px; background: #f4f5f8; font-size: 18px; line-height: 36px; color: #888; text-align: center; }
        .switch * { flex: 1; font-weight: 400; letter-spacing: 0.5px; }
        .switch .on { border-radius: 5px; background: #fff; color: #222; font-weight: 500; -webkit-text-stroke: 0.1px #222; }
        .last { height: 32px; }
      </style>
      <div class="plot">
        <svg width="244" height="296" viewBox="366 14 732 889">
          <path d="M366 15H420V20H597V26H760V31H827V36H775V41H757V46H947V51H1097V56H366z" fill="#67bf50"/>
          <path d="M366 57H1033V62H997V67H982V72H1030V78H978V83H834V88H737V93H673V98H655V103H680V109H790V114H948V119H990V124H970V129H1020V135H1100V140H1012V145H945V150H837V156H807V165H785V172H728V178H686V183H680V192H715V198H729V204H931V214H1005V219H1042V224H870V230H700V236H711V245H708V250H715V260H748V265H790V275H825V282H920V286H908V291H783V297H675V302H578V307H502V313H467V318H472L430 330 410 347 450 373 472 400 490 405V411H521V416H590V421H582V427H500V432H468L460 441H502V449H553V454H608V459H594V464H552V470H498V475H435V481H395V486H372V490H366z" fill="#eb4f50"/>
          <path d="M366 506H636V511H710V516H567V521H422V526H386L403 549 399 560 395 608 407 632 374 693H386V699H421V705H392V710H366z" fill="#eb5354"/>
        </svg>
      </div>
      <div class="legend">
        <span style="--dot:#5fb84a"><i></i>套牢</span><span style="--dot:#ea4a4b"><i></i>获利</span>
      </div>
      <div class="row first"><span>获利比例</span><b>89.55%</b></div>
      <div class="row"><span>平均成本</span><b>27.64</b></div>
      <div class="switch"><b class="on">90%筹码</b><span>70%筹码</span></div>
      <div class="row"><span>价格区间</span><b>23.86–29.26</b></div>
      <div class="row"><span>集中度</span><b>10.17%</b></div>
      <div class="row last">
        <span>说明<svg width="18" height="18" viewBox="0 0 18 18"><circle cx="9" cy="9" r="8.700" fill="#c9c9c9"/><path d="M9 7.800V14M9 4v2.200" stroke="#fff" stroke-width="2"/></svg></span>
        <b>2025–11–06 11:15</b>
      </div>`;
  }
}
customElements.define('chip-panel', ChipPanel);

class ChartBoard extends BaseElement {
  render() {
    return `
      <style>
        :host { position: relative; display: flex; height: 900.500px; padding-left: 11px; border-bottom: 2px solid #ebecef; }
        .charts { width: 490px; }
        .stack { position: relative; border-right: 1.500px solid #a8a8ac; width: 490px; height: 850.500px; }
        .bias { --track: -0.9px; }
        .next {
          position: absolute; right: -1px; top: 298px; width: 27px; height: 35px; border-radius: 8px 0 0 8px;
          background: rgba(110, 110, 110, 0.75);
        }
        .drawing { position: absolute; left: 390px; top: -4px; pointer-events: none; z-index: 3; }
      </style>
      <div class="charts">
        <div class="stack">
          <price-chart></price-chart>
          <indicator-bar cols="89.5px 128.5px auto" values="3791万↓|MA1:2.13亿↓|MA2:3.81亿↓">成交额</indicator-bar>
          <volume-chart></volume-chart>
          <indicator-bar cols="107.5px 118px auto" values="DIF:0.27↓|DEA:0.30↓|M:–0.07↑">MACD</indicator-bar>
          <macd-chart></macd-chart>
          <indicator-bar class="bias" cols="117.5px 121px auto" values="BIAS1:0.58↑|BIAS2:0.09↑|BIAS3:1.79↓">BIAS</indicator-bar>
          <bias-chart></bias-chart>
          <indicator-bar cols="127px auto" values="WR1:19.84↓|WR2:14.83↓">WR</indicator-bar>
          <wr-chart></wr-chart>
          <div class="next">
            <svg width="27" height="35" viewBox="0 0 27 35"><path d="m11 11 7 7-7 7" fill="none" stroke="#fff" stroke-width="3"/></svg>
          </div>
        </div>
        <time-axis></time-axis>
      </div>
      <chip-panel></chip-panel>
      <svg class="drawing" width="378" height="310" viewBox="0 0 1134 930" fill="none" stroke="#000" stroke-width="13" stroke-linecap="round" stroke-linejoin="round">
        <path d="M555 765 545 778Q530 785 512 783L475 803H160Q125 797 92 782L47 752 44 735Q41 640 50 575 60 510 122 427L172 376 260 318Q310 291 370 267 430 245 460 242L520 238Q590 223 640 222H930Q955 224 998 243L1018 262Q1030 284 1040 315 1056 360 1057 372V500Q1050 520 1037 536 1030 555 1016 570 975 612 912 650L880 663 745 720Q690 750 640 766 600 780 580 784L512 783Q490 790 476 808L470 819"/>
      </svg>`;
  }
}
customElements.define('chart-board', ChartBoard);

class PromoBanner extends BaseElement {
  render() {
    return `
      <style>
        :host { height: 78px; padding: 10.500px 11px 0 10px; border-bottom: 2px solid #eeeff1; }
        .pill { display: flex; align-items: center; height: 57px; padding: 0 21px 0 18px; border-radius: 28px; background: #fdece4; color: #ea5504; font-size: 22px; }
        .text { flex: 1; margin: -1px 0 0 17px; letter-spacing: 0.32px; word-spacing: -3px; white-space: nowrap; }
        .bar { width: 1.500px; height: 27px; margin-right: 13px; background: #ee7a40; }
      </style>
      <div class="pill">
        <svg width="27" height="24" viewBox="0 0 27 24" fill="#ea5504"><path d="M0 7h2.500v10H0zM4.500 7 26.500 0v24h-3v-3h-3.500l-1 1.500-6-1-1-2.500-7.500-2.500z"/></svg>
        <span class="text">组队 PK 瓜分大奖，更有千元红包月月赢&gt;&gt;</span>
        <i class="bar"></i>
        <svg width="15" height="15" viewBox="0 0 15 15"><path d="m1 1 13 13M14 1 1 14" stroke="#ea5504" stroke-width="1.800"/></svg>
      </div>`;
  }
}
customElements.define('promo-banner', PromoBanner);

class InfoTabs extends BaseElement {
  render() {
    const tabs = ['股吧', '盘口', '资讯', '公告', '研报', '财务', '资料'];
    return `
      <style>
        :host { height: 77px; padding: 0 5px; overflow: hidden; }
        .tabs { display: grid; grid-template-columns: repeat(7, 1fr); height: 62px; margin-right: 1px; border-bottom: 2px solid #edeef0; }
        .tab { display: flex; flex-direction: column; align-items: center; font-size: 24.500px; line-height: 53px; height: 60px; color: #6b6b6b; padding-top: 6px; }
        .on { color: #ee5407; -webkit-text-stroke: 0.5px #ee5407; }
        .on::after { content: ""; width: 35px; height: 6px; margin-top: -6px; border-radius: 2px; background: #ee5407; }
        .posts { display: flex; gap: 10px; padding: 7px 19px 0; }
        .posts i { flex: 1; height: 20px; border-radius: 10px 10px 0 0; background: linear-gradient(90deg, #fff5f2 50%, #ffeeec 52%, #ffeeec 65%, #fff5f3 68%); }
      </style>
      <div class="tabs">${tabs.map((t, i) => `<div class="tab ${i ? '' : 'on'}">${t}</div>`).join('')}</div>
      <div class="posts"><i></i><i></i></div>`;
  }
}
customElements.define('info-tabs', InfoTabs);

class TradeBar extends BaseElement {
  render() {
    return `
      <style>
        :host { height: 145.500px; border-top: 2px solid #e6e7ea; background: #f7f8fb; }
        .row { display: flex; height: 86px; padding-top: 10px; }
        .index { width: 158px; margin-top: -1px; font-size: 22px; line-height: 31px; text-align: center; color: #6b6b6b; white-space: nowrap; }
        .index svg { margin: -2px auto 4px; }
        .index em { font-style: normal; color: #f5303a; }
        .index .second em { margin-left: 10px; }
        .second { margin-left: 14px; letter-spacing: 0.2px; }
        .btn { width: 139.500px; height: 63px; border-radius: 9px; color: #fff; text-align: center; font-size: 24.500px; line-height: 63px; -webkit-text-stroke: 0.5px #fff; }
        .buy { margin-left: 19.500px; background: linear-gradient(#f1504a, #ec706b); }
        .sell { margin-left: 7.500px; background: linear-gradient(#3b76fb, #648ffe); }
        .action { display: flex; flex-direction: column; align-items: center; width: 101px; margin-top: -1px; font-size: 20.500px; line-height: 32px; color: #666; }
        .icon { display: flex; align-items: center; justify-content: center; height: 43px; font-size: 34px; color: #2b2b2b; -webkit-text-stroke: 0.6px #2b2b2b; }
        .home { width: 274px; height: 9px; margin: 35px auto 0; border-radius: 4px; background: #000; }
      </style>
      <div class="row">
        <div class="index">
          <svg width="12" height="7" viewBox="0 0 12 7"><path d="M6 0l6 7H0z" fill="#666"/></svg>
          <em>4004.77</em>
          <div class="second">上证<em>0.89%</em></div>
        </div>
        <div class="btn buy">买</div>
        <div class="btn sell">卖</div>
        <div class="action"><div class="icon">撤</div>撤单</div>
        <div class="action"><div class="icon">
          <svg width="38" height="42" viewBox="0 0 38 42" fill="none" stroke="#2b2b2b" stroke-width="2.800" stroke-linejoin="round">
            <path d="M16.500 2.500q2.500-1.500 5 0l12 7q2 1.300 2 3.500v16q0 2.200-2 3.500l-12 7q-2.500 1.500-5 0l-12-7q-2-1.300-2-3.500V13q0-2.200 2-3.500z"/><circle cx="19" cy="21" r="6.500"/>
          </svg></div>设自选</div>
        <div class="action"><div class="icon">
          <svg width="30" height="7" viewBox="0 0 30 7" fill="#2b2b2b"><circle cx="3.500" cy="3.500" r="3.200"/><circle cx="15" cy="3.500" r="3.200"/><circle cx="26.500" cy="3.500" r="3.200"/></svg></div>更多</div>
      </div>
      <div class="home"></div>`;
  }
}
customElements.define('trade-bar', TradeBar);

class StockApp extends BaseElement {
  render() {
    return `
      <style>
        :host { width: 768px; height: 1670px; overflow: hidden; background: #fff; }
      </style>
      <status-bar></status-bar>
      <stock-header></stock-header>
      <quote-grid></quote-grid>
      <period-tabs></period-tabs>
      <period-chips></period-chips>
      <overlay-bar></overlay-bar>
      <chart-board></chart-board>
      <promo-banner></promo-banner>
      <info-tabs></info-tabs>
      <trade-bar></trade-bar>`;
  }
}
customElements.define('stock-app', StockApp);
</script>
</body>
</html>
